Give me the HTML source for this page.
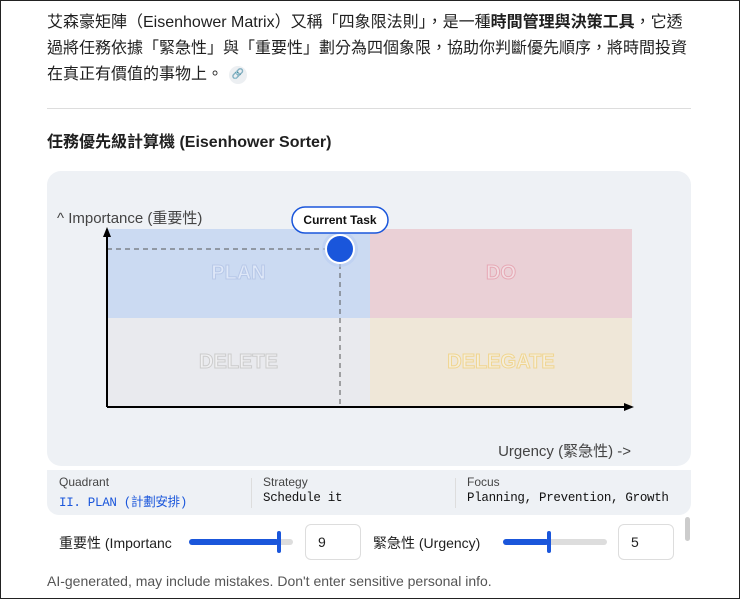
<!DOCTYPE html>
<html><head><meta charset="utf-8"><style>
*{margin:0;padding:0;box-sizing:border-box}
body{width:740px;height:599px;background:#fff;font-family:"Liberation Sans","Noto Sans CJK TC",sans-serif;color:#1f1f1f;position:relative;overflow:hidden;border:1px solid #222}
.p{position:absolute;left:46px;top:9px;width:645px;font-size:16px;line-height:26px}
.lk{display:inline-block;width:18px;height:18px;border-radius:50%;background:#eceff2;vertical-align:middle;text-align:center;font-size:10px;line-height:18px;margin-left:6px}
.hr{position:absolute;left:46px;top:107px;width:644px;height:1px;background:#ddd}
h3{position:absolute;left:46px;top:127px;font-size:16px;font-weight:bold}
.card{position:absolute;left:46px;top:170px;width:644px;height:295px;background:#eef1f5;border-radius:14px}
.q{position:absolute;display:flex;align-items:center;justify-content:center;font-weight:bold;font-size:20px;color:#fff;-webkit-text-stroke:1px}
.info{position:absolute;left:46px;top:469px;width:644px;height:45px;background:#eef1f5;border-radius:0 0 12px 12px}
.col{position:absolute;top:5px;font-size:12px;color:#444}
.col b{display:block;font-family:"Liberation Mono","Noto Sans CJK TC",monospace;font-weight:normal;font-size:12.5px;color:#111;margin-top:2px;letter-spacing:-0.3px}
.sep{position:absolute;top:8px;width:1px;height:30px;background:#ddd}
.lbl{position:absolute;top:532px;font-size:14px}
.box{position:absolute;top:523px;width:56px;height:36px;border:1px solid #ddd;border-radius:6px;font-size:14px;padding:9px 12px}
.foot{position:absolute;left:46px;top:572px;font-size:14px;color:#555}
</style></head><body>
<div class="p">艾森豪矩陣（Eisenhower Matrix）又稱「四象限法則」，是一種<b>時間管理與決策工具</b>，它透過將任務依據「緊急性」與「重要性」劃分為四個象限，協助你判斷優先順序，將時間投資在真正有價值的事物上。<span class="lk">🔗</span></div>
<div class="hr"></div>
<h3>任務優先級計算機 (Eisenhower Sorter)</h3>
<div class="card"></div>
<div class="q" style="left:106px;top:228px;width:263px;height:89px;background:#cbdaf2;color:#dfe8f8;-webkit-text-stroke-color:#b8c8e8">PLAN</div>
<div class="q" style="left:369px;top:228px;width:262px;height:89px;background:#ead0d6;color:#f1dde2;-webkit-text-stroke-color:#e6a9b5">DO</div>
<div class="q" style="left:106px;top:317px;width:263px;height:89px;background:#e9eaee;color:#f0f0f2;-webkit-text-stroke-color:#ccc">DELETE</div>
<div class="q" style="left:369px;top:317px;width:262px;height:89px;background:#efe7d8;color:#f5eedc;-webkit-text-stroke-color:#f0d590">DELEGATE</div>
<svg style="position:absolute;left:0;top:0" width="740" height="470">
<line x1="106" y1="248" x2="325" y2="248" stroke="#555" stroke-dasharray="5,4" stroke-width="1"/>
<line x1="339" y1="263" x2="339" y2="404" stroke="#555" stroke-dasharray="5,4" stroke-width="1"/>
<line x1="106" y1="406" x2="106" y2="232" stroke="#000" stroke-width="2"/>
<polygon points="106,226 102,236 110,236" fill="#000"/>
<line x1="106" y1="406" x2="626" y2="406" stroke="#000" stroke-width="2"/>
<polygon points="633,406 623,402 623,410" fill="#000"/>
<circle cx="339" cy="248" r="18" fill="#b9cdf2" opacity="0.6"/>
<circle cx="339" cy="248" r="15" fill="#fff"/>
<circle cx="339" cy="248" r="13" fill="#1a56db"/>
<rect x="291" y="206" width="96" height="26" rx="13" fill="#fff" stroke="#1a56db" stroke-width="1.5"/>
<text x="339" y="223" text-anchor="middle" font-family="Liberation Sans" font-size="12" font-weight="bold" fill="#111">Current Task</text>
<text x="56" y="222" font-family="Liberation Sans,Noto Sans CJK TC" font-size="15" fill="#444">^ Importance (重要性)</text>
<text x="630" y="455" text-anchor="end" font-family="Liberation Sans,Noto Sans CJK TC" font-size="15" fill="#444">Urgency (緊急性) -&gt;</text>
</svg>
<div class="info">
<div class="col" style="left:12px">Quadrant<b style="color:#1a56db">II. PLAN (計劃安排)</b></div>
<div class="sep" style="left:204px"></div>
<div class="col" style="left:216px">Strategy<b>Schedule it</b></div>
<div class="sep" style="left:408px"></div>
<div class="col" style="left:420px">Focus<b>Planning, Prevention, Growth</b></div>
</div>
<div class="lbl" style="left:58px">重要性 (Importanc</div>
<div style="position:absolute;left:188px;top:538px;width:104px;height:6px;border-radius:3px;background:#ddd"><div style="width:90px;height:6px;border-radius:3px;background:#1a56db"></div></div>
<div style="position:absolute;left:276px;top:530px;width:4px;height:22px;border-radius:2px;background:#1a56db"></div>
<div class="box" style="left:304px">9</div>
<div class="lbl" style="left:372px">緊急性 (Urgency)</div>
<div style="position:absolute;left:502px;top:538px;width:104px;height:6px;border-radius:3px;background:#ddd"><div style="width:46px;height:6px;border-radius:3px;background:#1a56db"></div></div>
<div style="position:absolute;left:546px;top:530px;width:4px;height:22px;border-radius:2px;background:#1a56db"></div>
<div class="box" style="left:617px">5</div>
<div style="position:absolute;left:684px;top:516px;width:5px;height:24px;border-radius:3px;background:#ccc"></div>
<div class="foot">AI-generated, may include mistakes. Don't enter sensitive personal info.</div>
</body></html>
